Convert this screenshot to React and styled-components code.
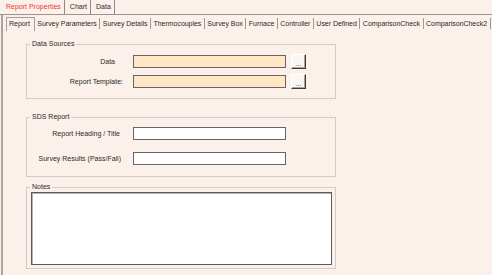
import React from 'react';
import styled, { createGlobalStyle } from 'styled-components';

const GlobalStyle = createGlobalStyle`
  html, body {
    margin: 0;
    padding: 0;
    background: #fcf0eb;
  }
  body {
    font-family: "Liberation Sans", Arial, sans-serif;
    font-size: 7px;
    color: #2a2a2a;
  }
`;

const Window = styled.div`
  width: 492px;
  height: 275px;
  overflow: hidden;
  background: #fcf0eb;
  display: flex;
  flex-direction: column;
`;

const TopTabs = styled.div`
  display: flex;
  height: 14px;
  border-bottom: 1px solid #9c9592;
  padding-left: 1px;
`;

const TopTab = styled.div`
  height: 14px;
  line-height: 13px;
  padding: 0 3px 0 5px;
  border-right: 1px solid #8f8a88;
  color: ${(p) => (p.$active ? '#f0382e' : '#2a2a2a')};
  white-space: nowrap;
`;

const OuterPanel = styled.div`
  flex: 1;
  margin-left: 1px;
  border-left: 2px solid #aaa3a0;
  display: flex;
  flex-direction: column;
`;

const InnerTabs = styled.div`
  display: flex;
  align-items: flex-end;
  height: 16px;
  padding-left: 3px;
`;

const InnerTab = styled.div`
  height: ${(p) => (p.$active ? '14px' : '11px')};
  line-height: ${(p) => (p.$active ? '12px' : '11px')};
  margin-bottom: ${(p) => (p.$active ? '0' : '2px')};
  padding: 0 2.5px;
  letter-spacing: -0.03px;
  white-space: nowrap;
  box-sizing: border-box;
  ${(p) =>
    p.$active
      ? `border: 1px solid #a49d9a; border-bottom: none; padding: 0 4px 0 2px;`
      : `border-right: 1px solid #9f9895;`}
`;

const Content = styled.div`
  padding: 9px 0 0 23px;
  display: flex;
  flex-direction: column;
`;

const Group = styled.fieldset`
  box-sizing: border-box;
  width: 310px;
  margin: ${(p) => p.$mt || 0}px 0 0 0;
  padding: ${(p) => p.$pad};
  border: 1px solid #d3cbc7;
  min-inline-size: 0;
  display: flex;
  flex-direction: column;
  gap: ${(p) => p.$gap || 0}px;
`;

const Legend = styled.legend`
  padding: 0 2px;
  margin-left: 3px;
  line-height: 8px;
  height: 8px;
  color: #2a2a2a;
`;

const Row = styled.div`
  display: flex;
  align-items: center;
  height: 15px;
`;

const Label = styled.label`
  width: 106px;
  box-sizing: border-box;
  text-align: right;
  padding-right: ${(p) => p.$pr}px;
  white-space: nowrap;
`;

const Field = styled.div`
  box-sizing: border-box;
  width: 153px;
  height: 13px;
  border: 1px solid #6b6464;
  background: ${(p) => (p.$peach ? '#ffe6c4' : '#ffffff')};
`;

const BrowseButton = styled.button`
  box-sizing: border-box;
  margin-left: 5px;
  width: 15px;
  height: 15px;
  padding: 0;
  font-family: inherit;
  font-size: 7px;
  line-height: 9px;
  color: #333;
  background: #fbf6f3;
  border-style: solid;
  border-width: 1px;
  border-color: #ffffff #3d3a39 #3d3a39 #ffffff;
  box-shadow: inset -1px -1px 0 #a9a3a0;
  display: flex;
  align-items: flex-end;
  justify-content: center;
`;

const Notes = styled.div`
  box-sizing: border-box;
  width: 301px;
  height: 73px;
  margin-left: 4px;
  border: 1px solid #5e5858;
  box-shadow: inset 1px 1px 0 #b9b3b0;
  background: #ffffff;
`;

const topTabs = ['Report Properties', 'Chart', 'Data'];
const innerTabs = [
  'Report',
  'Survey Parameters',
  'Survey Details',
  'Thermocouples',
  'Survey Box',
  'Furnace',
  'Controller',
  'User Defined',
  'ComparisonCheck',
  'ComparisonCheck2',
];

export default function App() {
  return (
    <Window>
      <GlobalStyle />
      <TopTabs>
        {topTabs.map((t, i) => (
          <TopTab key={t} $active={i === 0}>
            {t}
          </TopTab>
        ))}
      </TopTabs>
      <OuterPanel>
        <InnerTabs>
          {innerTabs.map((t, i) => (
            <InnerTab key={t} $active={i === 0}>
              {t}
            </InnerTab>
          ))}
        </InnerTabs>
        <Content>
          <Group $pad="6px 0 9px 0" $gap={5}>
            <Legend>Data Sources</Legend>
            <Row>
              <Label $pr={18}>Data</Label>
              <Field $peach />
              <BrowseButton>...</BrowseButton>
            </Row>
            <Row>
              <Label $pr={10}>Report Template:</Label>
              <Field $peach />
              <BrowseButton>...</BrowseButton>
            </Row>
          </Group>

          <Group $mt={14} $pad="5px 0 10px 0" $gap={10}>
            <Legend>SDS Report</Legend>
            <Row>
              <Label $pr={13}>Report Heading / Title</Label>
              <Field />
            </Row>
            <Row>
              <Label $pr={12}>Survey Results (Pass/Fail)</Label>
              <Field />
            </Row>
          </Group>

          <Group $mt={6} $pad="1px 0 3px 0">
            <Legend>Notes</Legend>
            <Notes />
          </Group>
        </Content>
      </OuterPanel>
    </Window>
  );
}
